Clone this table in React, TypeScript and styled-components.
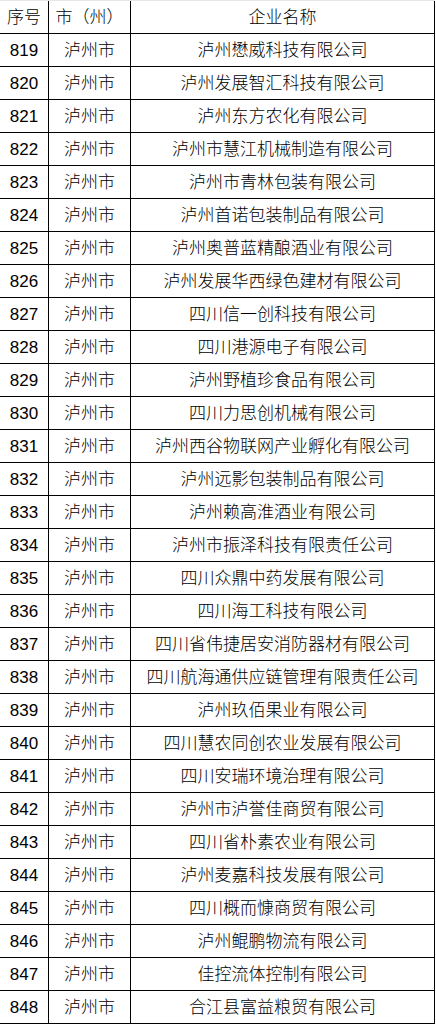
import React from "react";
import styled, { createGlobalStyle } from "styled-components";

const GlobalStyle = createGlobalStyle`
  html, body {
    margin: 0;
    padding: 0;
    background: #ffffff;
  }
  body {
    font-family: "Liberation Sans", "Noto Sans CJK SC", sans-serif;
    color: #000000;
  }
`;

const companies: string[] = [
  "泸州懋威科技有限公司",
  "泸州发展智汇科技有限公司",
  "泸州东方农化有限公司",
  "泸州市慧江机械制造有限公司",
  "泸州市青林包装有限公司",
  "泸州首诺包装制品有限公司",
  "泸州奥普蓝精酿酒业有限公司",
  "泸州发展华西绿色建材有限公司",
  "四川信一创科技有限公司",
  "四川港源电子有限公司",
  "泸州野植珍食品有限公司",
  "四川力思创机械有限公司",
  "泸州西谷物联网产业孵化有限公司",
  "泸州远影包装制品有限公司",
  "泸州赖高淮酒业有限公司",
  "泸州市振泽科技有限责任公司",
  "四川众鼎中药发展有限公司",
  "四川海工科技有限公司",
  "四川省伟捷居安消防器材有限公司",
  "四川航海通供应链管理有限责任公司",
  "泸州玖佰果业有限公司",
  "四川慧农同创农业发展有限公司",
  "四川安瑞环境治理有限公司",
  "泸州市泸誉佳商贸有限公司",
  "四川省朴素农业有限公司",
  "泸州麦嘉科技发展有限公司",
  "四川概而慷商贸有限公司",
  "泸州鲲鹏物流有限公司",
  "佳控流体控制有限公司",
  "合江县富益粮贸有限公司",
];

const Table = styled.div`
  width: 435px;
  border-top: 1px solid #e6e6e6;
`;

const Row = styled.div`
  display: grid;
  grid-template-columns: 49px 82px 304px;
  height: 33px;
  border-bottom: 1px solid #000000;
  box-sizing: border-box;
`;

const Cell = styled.div`
  display: flex;
  align-items: center;
  justify-content: center;
  border-right: 1px solid #000000;
  font-size: 17px;
  font-weight: 300;
  line-height: 1;
  white-space: nowrap;
  padding-top: 1px;
`;

export default function App() {
  return (
    <>
      <GlobalStyle />
      <Table>
        <Row>
          <Cell>序号</Cell>
          <Cell>市（州）</Cell>
          <Cell>企业名称</Cell>
        </Row>
        {companies.map((name, i) => (
          <Row key={name}>
            <Cell>{819 + i}</Cell>
            <Cell>泸州市</Cell>
            <Cell>{name}</Cell>
          </Row>
        ))}
      </Table>
    </>
  );
}
